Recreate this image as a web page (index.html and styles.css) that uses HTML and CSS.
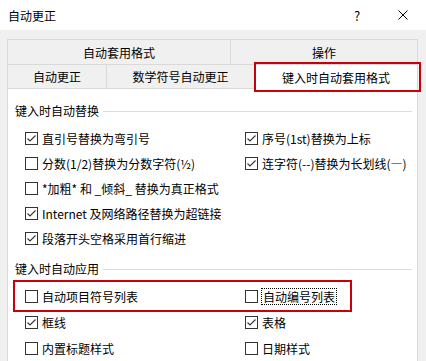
FILE: index.html
```html
<!DOCTYPE html>
<html lang="zh-CN">
<head>
  <meta charset="UTF-8">
  <title>自动更正</title>
  <link rel="stylesheet" href="styles.css">
</head>
<body>
  <div class="titlebar">
    <span class="title">自动更正</span>
    <span class="tb-btn">?</span>
    <span class="tb-btn">
      <svg width="10" height="10" viewBox="0 0 10 10"><path d="M0.5 0.5L9.5 9.5M9.5 0.5L0.5 9.5" stroke="#000" stroke-width="1"/></svg>
    </span>
  </div>

  <div class="tabs">
    <div class="tab-row row-top">
      <div class="tab tab-format">自动套用格式</div>
      <div class="tab tab-action">操作</div>
    </div>
    <div class="tab-row row-bottom">
      <div class="tab tab-auto">自动更正</div>
      <div class="tab tab-math">数学符号自动更正</div>
      <div class="tab tab-typing active">键入时自动套用格式</div>
    </div>
  </div>

  <div class="panel">
    <!-- 键入时自动替换 -->
    <div class="group-title">键入时自动替换</div>
    <div class="opts">
      <label class="opt"><span class="box checked"><svg width="11" height="11" viewBox="0 0 11 11"><path d="M1.5 5.5L4 8L9.5 2.5" fill="none" stroke="#333" stroke-width="1.1"/></svg></span>直引号替换为弯引号</label>
      <label class="opt"><span class="box checked"><svg width="11" height="11" viewBox="0 0 11 11"><path d="M1.5 5.5L4 8L9.5 2.5" fill="none" stroke="#333" stroke-width="1.1"/></svg></span>序号(1st)替换为上标</label>
      <label class="opt"><span class="box"></span>分数(1/2)替换为分数字符(½)</label>
      <label class="opt"><span class="box checked"><svg width="11" height="11" viewBox="0 0 11 11"><path d="M1.5 5.5L4 8L9.5 2.5" fill="none" stroke="#333" stroke-width="1.1"/></svg></span>连字符(--)替换为长划线(—)</label>
      <label class="opt wide"><span class="box"></span>*加粗* 和 _倾斜_ 替换为真正格式</label>
      <label class="opt wide"><span class="box checked"><svg width="11" height="11" viewBox="0 0 11 11"><path d="M1.5 5.5L4 8L9.5 2.5" fill="none" stroke="#333" stroke-width="1.1"/></svg></span>Internet 及网络路径替换为超链接</label>
      <label class="opt wide"><span class="box checked"><svg width="11" height="11" viewBox="0 0 11 11"><path d="M1.5 5.5L4 8L9.5 2.5" fill="none" stroke="#333" stroke-width="1.1"/></svg></span>段落开头空格采用首行缩进</label>
    </div>

    <!-- 键入时自动应用 -->
    <div class="group-title second">键入时自动应用</div>
    <div class="opts tall">
      <label class="opt marked"><span class="box"></span>自动项目符号列表</label>
      <label class="opt"><span class="box"></span><span class="focus">自动编号列表</span></label>
      <label class="opt"><span class="box checked"><svg width="11" height="11" viewBox="0 0 11 11"><path d="M1.5 5.5L4 8L9.5 2.5" fill="none" stroke="#333" stroke-width="1.1"/></svg></span>框线</label>
      <label class="opt"><span class="box checked"><svg width="11" height="11" viewBox="0 0 11 11"><path d="M1.5 5.5L4 8L9.5 2.5" fill="none" stroke="#333" stroke-width="1.1"/></svg></span>表格</label>
      <label class="opt"><span class="box"></span>内置标题样式</label>
      <label class="opt"><span class="box"></span>日期样式</label>
    </div>
  </div>
</body>
</html>
```

FILE: styles.css
```css
body {
  margin: 0;
  background-color: #f0f0f0;
  font-family: "Noto Sans CJK SC", "Microsoft YaHei", sans-serif;
  font-size: 12px;
  color: #000;
  height: 361px;
  overflow: hidden;
}
.titlebar {
  height: 30px;
  background: #fff;
  display: flex;
  align-items: center;
  padding-left: 8px;
}
.title {
  flex: 1;
}
.tb-btn {
  width: 46px;
  height: 30px;
  display: flex;
  align-items: center;
  justify-content: center;
  font-size: 13px;
}
.tabs {
  margin: 9px 0 0 7px;
  width: 411px;
}
.tab-row {
  display: flex;
  border-top: 1px solid #d9d9d9;
}
.row-top {
  height: 24px;
}
.row-bottom {
  height: 23px;
}
.tab {
  display: flex;
  align-items: center;
  justify-content: center;
  border-right: 1px solid #d9d9d9;
  box-sizing: border-box;
}
.tab:first-child {
  border-left: 1px solid #d9d9d9;
}
.tab-format { width: 224px; }
.tab-action { flex: 1; }
.tab-auto { width: 100px; }
.tab-math { width: 148px; }
.tab-typing { flex: 1; }
.tab.active {
  background: #fff;
  position: relative;
  z-index: 1;
  height: 24px;
}
.tab.active::after {
  content: "";
  position: absolute;
  top: -3px;
  bottom: -3px;
  left: -1px;
  right: -4px;
  border: 2px solid #c8000a;
}
.panel {
  margin-left: 7px;
  width: 411px;
  height: 273px;
  box-sizing: border-box;
  background: #fff;
  border: 1px solid #d9d9d9;
  border-bottom: none;
  padding: 14px 5px 0 7px;
  overflow: hidden;
}
.group-title {
  display: flex;
  align-items: center;
  height: 16px;
  line-height: 16px;
}
.group-title::after {
  content: "";
  flex: 1;
  height: 1px;
  background: #dcdcdc;
  margin-left: 4px;
}
.group-title.second {
  margin-top: 10px;
}
.opts {
  display: grid;
  grid-template-columns: 220px 1fr;
  grid-auto-rows: 25px;
  padding-left: 10px;
  margin-top: 7px;
}
.opts.tall {
  grid-auto-rows: 26px;
  margin-top: 6px;
}
.opt {
  display: flex;
  align-items: center;
  gap: 4px;
  white-space: nowrap;
}
.opt.wide {
  grid-column: 1;
}
.box {
  width: 13px;
  height: 13px;
  box-sizing: border-box;
  border: 1px solid #333;
  background: #fff;
  display: flex;
  align-items: center;
  justify-content: center;
  flex-shrink: 0;
}
.marked {
  position: relative;
}
.marked::before {
  content: "";
  position: absolute;
  left: -12px;
  top: -3px;
  bottom: -3px;
  width: 339px;
  border: 2px solid #c8000a;
  box-sizing: border-box;
  pointer-events: none;
}
.focus {
  display: inline-block;
  line-height: 15px;
  border: 1px dotted #000;
  padding: 0 1px;
  margin-left: -1px;
}
```
